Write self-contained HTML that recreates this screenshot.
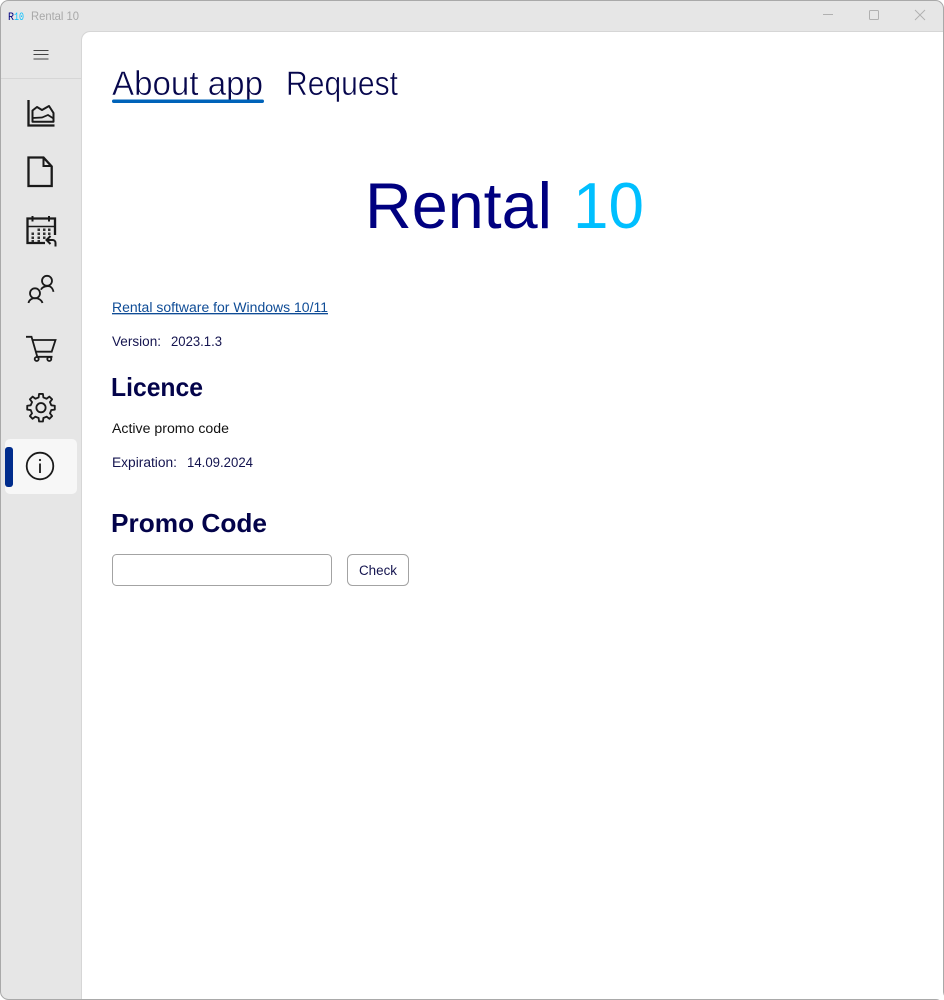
<!DOCTYPE html>
<html lang="en">
<head>
<meta charset="utf-8">
<title>Rental 10</title>
<style>
html,body{margin:0;padding:0;width:944px;height:1000px;overflow:hidden;background:#fff}
svg{display:block}
text{font-family:"Liberation Sans",sans-serif}
</style>
</head>
<body>
<svg width="944" height="1000" viewBox="0 0 944 1000" xmlns="http://www.w3.org/2000/svg">
  <!-- window -->
  <rect x="0.5" y="0.5" width="943" height="999" rx="8" fill="#e6e6e6" stroke="#a9a9a9"/>
  <path d="M82 999V40a8 8 0 0 1 8-8H943V999Z" fill="#fff"/>
  <path d="M81.5 999V40a8.500 8.500 0 0 1 8.500-8.500H943" fill="none" stroke="#d6d6d6"/>
  <path d="M1 78.500H81" stroke="#d6d6d6"/>

  <!-- title bar -->
  <text x="8" y="20" font-size="11" textLength="6" lengthAdjust="spacingAndGlyphs" style="font-family:'Liberation Mono',monospace" fill="#000080">R</text>
  <text x="14" y="20" font-size="11" textLength="10" lengthAdjust="spacingAndGlyphs" style="font-family:'Liberation Mono',monospace" fill="#00bfff">10</text>
  <text x="31" y="20" font-size="12" textLength="48" lengthAdjust="spacingAndGlyphs" fill="#a8a8a8">Rental 10</text>
  <g fill="none" stroke="#b0b0b0">
    <path d="M823 14.500H833"/>
    <rect x="869.500" y="10.500" width="9" height="9" rx="1"/>
    <path d="M915 10L925 20M925 10L915 20" stroke-width=".9"/>
  </g>

  <!-- hamburger -->
  <path d="M33.500 50.500H48.500M33.500 54.500H48.500M33.500 59H48.500" stroke="#444" fill="none"/>

  <!-- active item -->
  <rect x="5" y="439" width="72" height="55" rx="5" fill="#f7f7f7"/>
  <rect x="5" y="447" width="8" height="40" rx="3" fill="#002c8c"/>

  <!-- nav icons -->
  <g fill="none" stroke="#1a1a1a" stroke-width="2.300">
    <!-- chart -->
    <path d="M28.500 100V125.500H54.500"/>
    <path d="M32.500 121.800V110.500L37 107L42 110L49 106L53.500 113V121.800Z" stroke-width="2" stroke-linejoin="round"/>
    <path d="M32.500 118L42 117.500L48 115L53.500 118.500" stroke-width="1.700"/>
    <!-- document -->
    <path d="M28.500 157.500H43.500L51.700 166.500V186H28.500Z"/>
    <path d="M43.500 157.500V166H51.700" stroke-width="2"/>
    <!-- calendar -->
    <path d="M45 243H27.500V218.500H55V235"/>
    <path d="M27.500 226.500H55" stroke-width="1.600"/>
    <path d="M32.500 216V221.500M49 216V221.500" stroke-width="2"/>
    <path d="M50.500 236L46.500 240L50.500 244M47 240H52.500A3 3 0 0 1 55.500 243V246.500" stroke-width="2"/>
  </g>
  <g fill="#333">
    <rect x="37.500" y="228.500" width="2.500" height="2.500"/><rect x="43" y="228.500" width="2.500" height="2.500"/><rect x="48" y="228.500" width="2.500" height="2.500"/>
    <rect x="31.500" y="232.500" width="2.500" height="2.500"/><rect x="37.500" y="232.500" width="2.500" height="2.500"/><rect x="43" y="232.500" width="2.500" height="2.500"/><rect x="48" y="232.500" width="2.500" height="2.500"/>
    <rect x="31.500" y="236.500" width="2.500" height="2.500"/><rect x="37.500" y="236.500" width="2.500" height="2.500"/><rect x="43" y="236.500" width="2.500" height="2.500"/>
    <rect x="31.500" y="240" width="2.500" height="2"/><rect x="37.500" y="240" width="2.500" height="2"/>
  </g>
  <g fill="none" stroke="#1a1a1a" stroke-width="1.800">
    <!-- users -->
    <circle cx="35" cy="293.300" r="5"/>
    <path d="M28.500 303C29.500 296.500 40.500 296.500 42.500 303"/>
    <circle cx="47" cy="280.800" r="5"/>
    <path d="M41 289.800C42 286.500 48 285.500 50 286.500C52 287.500 53 289.500 53.500 291.800"/>
    <!-- cart -->
    <path d="M26 336.800H31.500L37.300 356.800H52.500"/>
    <path d="M33 340H55.500L51.700 351.700H36"/>
    <circle cx="36.700" cy="359" r="2"/>
    <circle cx="49.300" cy="359" r="2"/>
    <!-- gear -->
    <g transform="translate(41 407.700) scale(.96)" stroke-linejoin="round" stroke-width="1.900">
      <path d="M14.360-2.020L14.360 2.020L10.720 2.470L9.330 5.830L11.580 8.730L8.730 11.580L5.830 9.330L2.470 10.720L2.020 14.360L-2.020 14.360L-2.470 10.720L-5.830 9.330L-8.730 11.580L-11.580 8.730L-9.330 5.830L-10.720 2.470L-14.360 2.020L-14.360-2.020L-10.720-2.470L-9.330-5.830L-11.580-8.730L-8.730-11.580L-5.830-9.330L-2.470-10.720L-2.020-14.360L2.020-14.360L2.470-10.720L5.830-9.330L8.730-11.580L11.580-8.730L9.330-5.830L10.720-2.470Z"/>
      <circle r="4.800"/>
    </g>
    <!-- info -->
    <circle cx="40" cy="466" r="13.300" stroke-width="1.800"/>
    <path d="M40 463.500V473" stroke-width="1.800"/>
  </g>
  <circle cx="40" cy="460" r="1.100" fill="#1a1a1a"/>

  <!-- tabs -->
  <text x="112" y="95" font-size="34" textLength="151" lengthAdjust="spacingAndGlyphs" fill="#06064c" stroke="#fff" stroke-width=".55">About app</text>
  <text x="286" y="95" font-size="34" textLength="112" lengthAdjust="spacingAndGlyphs" fill="#06064c" stroke="#fff" stroke-width=".55">Request</text>
  <rect x="112" y="99.500" width="152" height="3.500" rx="1.700" fill="#0063b9"/>

  <!-- logo -->
  <text x="365" y="228" font-size="65" textLength="187" lengthAdjust="spacingAndGlyphs" fill="#000080">Rental</text>
  <text x="573" y="228" font-size="65" textLength="71" lengthAdjust="spacingAndGlyphs" fill="#00bfff">10</text>

  <!-- body text -->
  <text x="112" y="312" font-size="13.500" textLength="216" lengthAdjust="spacingAndGlyphs" fill="#0f4c96" text-decoration="underline">Rental software for Windows 10/11</text>
  <text x="112" y="346" font-size="13.500" textLength="49" lengthAdjust="spacingAndGlyphs" fill="#14144f">Version:</text>
  <text x="171" y="346" font-size="13.500" textLength="51" lengthAdjust="spacingAndGlyphs" fill="#14144f">2023.1.3</text>

  <text x="111" y="396" font-size="26" font-weight="700" textLength="92" lengthAdjust="spacingAndGlyphs" fill="#03034a">Licence</text>
  <text x="112" y="433" font-size="13.500" textLength="117" lengthAdjust="spacingAndGlyphs" fill="#111">Active promo code</text>
  <text x="112" y="467" font-size="13.500" textLength="65" lengthAdjust="spacingAndGlyphs" fill="#14144f">Expiration:</text>
  <text x="187" y="467" font-size="13.500" textLength="66" lengthAdjust="spacingAndGlyphs" fill="#14144f">14.09.2024</text>

  <text x="111" y="532" font-size="26" font-weight="700" textLength="156" lengthAdjust="spacingAndGlyphs" fill="#03034a">Promo Code</text>

  <!-- form -->
  <rect x="112.500" y="554.500" width="219" height="31" rx="4" fill="#fff" stroke="#a3a3a3"/>
  <rect x="347.500" y="554.500" width="61" height="31" rx="5" fill="#fff" stroke="#a3a3a3"/>
  <text x="359" y="575" font-size="13.500" textLength="38" lengthAdjust="spacingAndGlyphs" fill="#14144f">Check</text>
</svg>
</body>
</html>
